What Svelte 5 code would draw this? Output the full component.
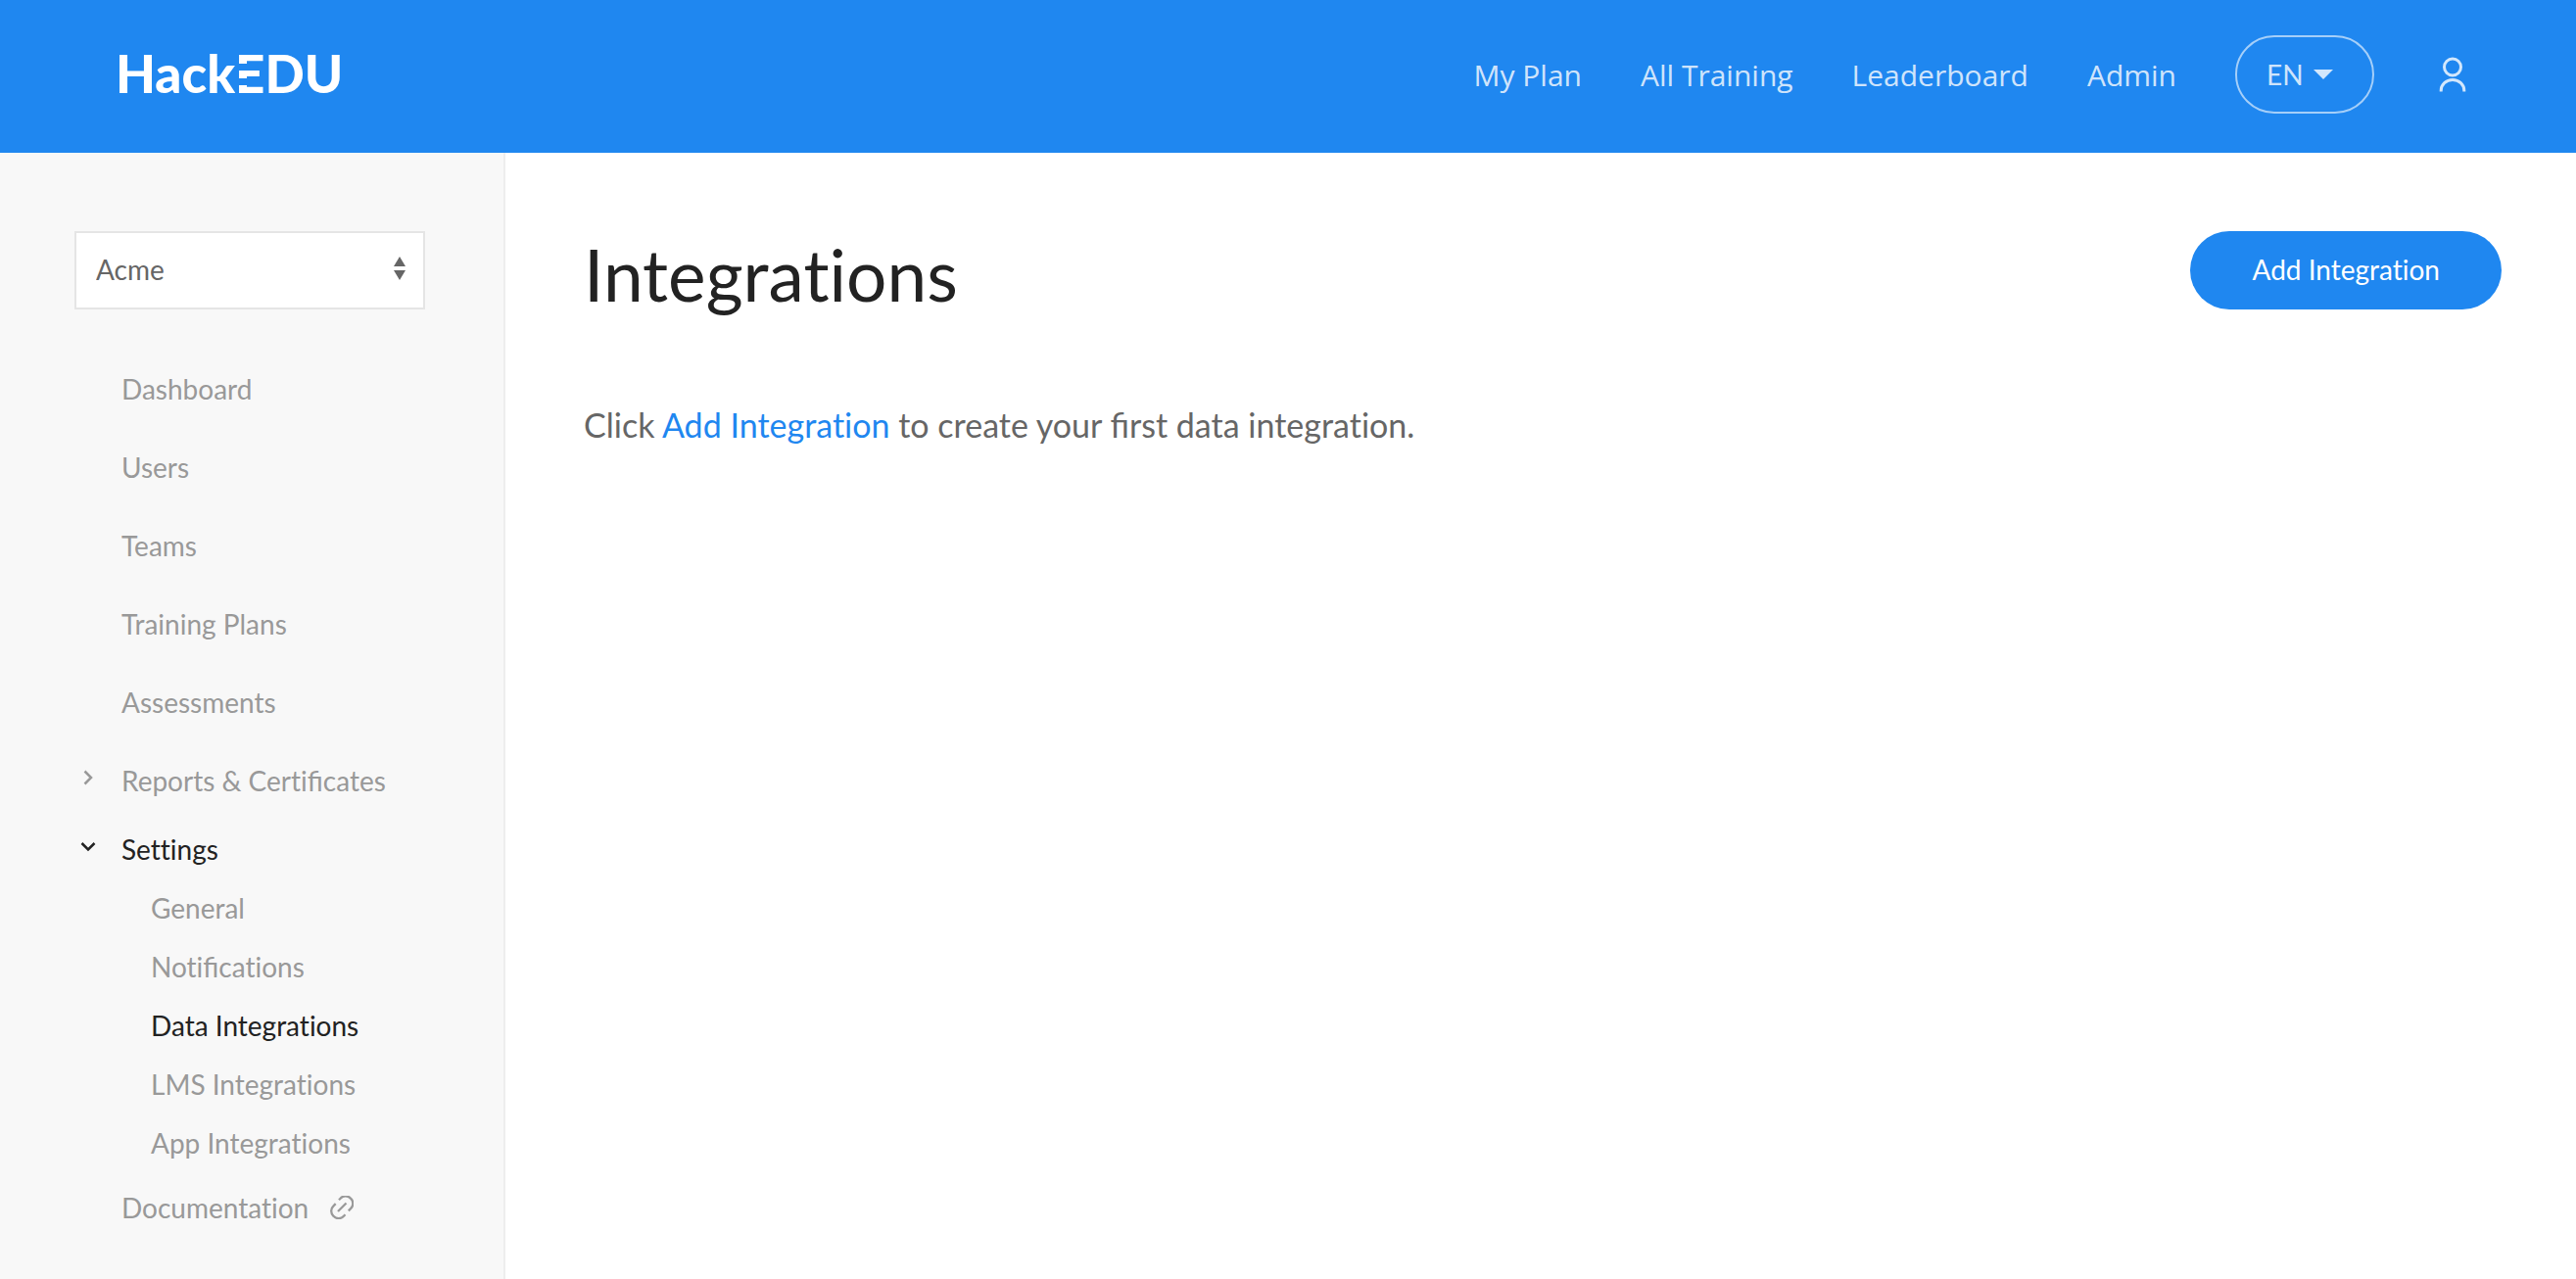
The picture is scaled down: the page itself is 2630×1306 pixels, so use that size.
<script>
  const navLinks = ['My Plan', 'All Training', 'Leaderboard', 'Admin'];
  const pages = ['Dashboard', 'Users', 'Teams', 'Training Plans', 'Assessments'];
  const settings = [
    { label: 'General' },
    { label: 'Notifications' },
    { label: 'Data Integrations', current: true },
    { label: 'LMS Integrations' },
    { label: 'App Integrations' }
  ];
  let organization = $state('Acme');
</script>

<!-- Joins only the "fi" pair; every other ligature stays off. -->
{#snippet text(value)}<span>{#each value.split('fi') as part, i}{#if i > 0}<span class="joined">fi</span>{/if}{part}{/each}</span>{/snippet}

<div class="page">
  <header class="topbar">
    <a class="logo" href="#home">Hack<span class="bars">E</span>DU</a>
    <nav class="topnav" aria-label="Main">
      {#each navLinks as label}
        <a href="#{label}">{label}</a>
      {/each}
      <button class="language" type="button">
        EN
        <svg width="20" height="10" viewBox="0 0 20 10" aria-hidden="true"><path d="M0 0h20L10 10z" fill="currentColor" /></svg>
      </button>
      <a class="account" href="#account" aria-label="Account">
        <svg width="28" height="36" viewBox="0 0 28 36" fill="none" stroke="currentColor" stroke-width="3" aria-hidden="true">
          <circle cx="14" cy="10.5" r="8.5" />
          <path d="M2.2 35.5v-1a11.8 11 0 0 1 23.6 0v1" />
        </svg>
      </a>
    </nav>
  </header>

  <div class="body">
    <aside class="sidebar">
      <div class="picker">
        <select aria-label="Organization" bind:value={organization}>
          <option>Acme</option>
        </select>
        <svg class="sort" width="12" height="24" viewBox="0 0 12 24" aria-hidden="true"><path d="M6 0l6 10H0zM0 14h12L6 24z" fill="currentColor" /></svg>
      </div>
      <nav aria-label="Admin">
        <ul class="menu">
          {#each pages as label}
            <li><a class="item" href="#{label}">{label}</a></li>
          {/each}
          <li>
            <a class="item" href="#reports">
              <svg class="chevron" width="16" height="16" viewBox="0 0 16 16" aria-hidden="true"><path d="M4.500 1.500L11 8L4.500 14.500" /></svg>
              {@render text('Reports & Certificates')}
            </a>
          </li>
          <li>
            <a class="item group" href="#settings">
              <svg class="chevron" width="16" height="16" viewBox="0 0 16 16" aria-hidden="true"><path d="M1.500 5L8 11.500L14.500 5" /></svg>
              Settings
            </a>
            <ul class="submenu">
              {#each settings as { label, current }}
                <li><a class="subitem" class:current aria-current={current ? 'page' : undefined} href="#{label}">{@render text(label)}</a></li>
              {/each}
            </ul>
          </li>
          <li>
            <a class="item docs" href="#documentation">
              Documentation
              <svg width="24" height="24" viewBox="0 0 24 24" fill="none" stroke="currentColor" stroke-width="2.300" aria-hidden="true">
                <path d="M9 4.200l1.500-1.500a7.100 7.100 0 0 1 10.500 0a7.100 7.100 0 0 1 0 10.500l-2.200 2.200" />
                <path d="M15.500 19.300l-1.500 1.500a7.100 7.100 0 0 1-10.500 0a7.100 7.100 0 0 1 0-10.500l2.200-2.200" />
                <path d="M8 16l8.500-8.500" />
              </svg>
            </a>
          </li>
        </ul>
      </nav>
    </aside>

    <main>
      <div class="heading">
        <h1>Integrations</h1>
        <button class="primary" type="button">Add Integration</button>
      </div>
      <p>Click <a href="#add">Add Integration</a> {@render text('to create your first data integration.')}</p>
    </main>
  </div>
</div>

<style>
  :global(body) {
    margin: 0;
    background: #fff;
  }
  .page {
    display: flex;
    flex-direction: column;
    min-height: 100vh;
    font-family: Lato, sans-serif;
    font-size: 28px;
    font-variant-ligatures: none;
    color: #666;
  }
  .page * {
    box-sizing: border-box;
  }
  .joined {
    font-variant-ligatures: normal;
  }
  a {
    color: inherit;
    text-decoration: none;
  }
  .topbar {
    display: flex;
    align-items: center;
    justify-content: space-between;
    height: 156px;
    padding: 0 106px 4px 118px;
    background: #1f87f0;
    color: #fff;
  }
  .logo {
    padding-bottom: 2px;
    font-size: 53px;
    font-weight: 900;
    line-height: 60px;
  }
  /* The E is cut into three separate bars. */
  .bars {
    background: linear-gradient(#fff 22px, transparent 22px 29px, #fff 29px 37px, transparent 37px 44px, #fff 44px);
    background-clip: text;
    color: transparent;
  }
  .topnav {
    display: flex;
    align-items: center;
    gap: 60px;
    font-family: 'Open Sans', sans-serif;
    font-size: 30px;
    font-weight: 400;
    color: rgba(255, 255, 255, 0.8);
  }
  .language {
    display: flex;
    align-items: center;
    gap: 10px;
    width: 142px;
    height: 80px;
    padding: 0 0 0 30px;
    border: 2px solid rgba(255, 255, 255, 0.6);
    border-radius: 40px;
    background: none;
    color: inherit;
    font: 400 28px Lato, sans-serif;
  }
  .account {
    display: flex;
    justify-content: center;
    width: 40px;
  }
  .body {
    display: flex;
    flex: 1;
  }
  .sidebar {
    width: 516px;
    flex-shrink: 0;
    padding: 80px 80px 32px 76px;
    border-right: 2px solid #eee;
    background: #f8f8f8;
  }
  .picker {
    display: grid;
    align-items: center;
    margin-bottom: 42px;
  }
  .picker > * {
    grid-area: 1 / 1;
  }
  select {
    width: 100%;
    height: 80px;
    padding: 0 20px 2px;
    border: 2px solid #e5e5e5;
    border-radius: 0;
    background: #fff;
    color: #666;
    font: inherit;
    appearance: none;
  }
  .sort {
    justify-self: end;
    margin: 0 20px 4px 0;
    pointer-events: none;
  }
  ul {
    margin: 0;
    padding: 0;
    list-style: none;
  }
  .menu {
    color: #999;
  }
  .item {
    display: flex;
    align-items: center;
    height: 80px;
    padding: 0 0 2px 48px;
  }
  .group {
    height: 60px;
    color: #222;
  }
  .chevron {
    flex-shrink: 0;
    margin: 0 26px 6px -42px;
    fill: none;
    stroke: currentColor;
    stroke-width: 2.500;
  }
  .subitem {
    display: flex;
    align-items: center;
    height: 60px;
    padding: 0 0 2px 78px;
  }
  .current {
    color: #222;
  }
  .docs {
    gap: 22px;
    height: 72px;
  }
  main {
    flex: 1;
    padding: 80px 76px 80px 80px;
  }
  .heading {
    display: flex;
    align-items: flex-start;
    justify-content: space-between;
  }
  h1 {
    margin: 0;
    color: #222;
    font-size: 73px;
    font-weight: 400;
    line-height: 88px;
  }
  .primary {
    height: 80px;
    padding: 0 63px 2px;
    border: 0;
    border-radius: 40px;
    background: #1f87f0;
    color: #fff;
    font: inherit;
    font-variant-ligatures: none;
  }
  p {
    margin: 84px 0 0;
    font-size: 34px;
    line-height: 52px;
  }
  p a {
    color: #1f87f0;
  }
</style>
